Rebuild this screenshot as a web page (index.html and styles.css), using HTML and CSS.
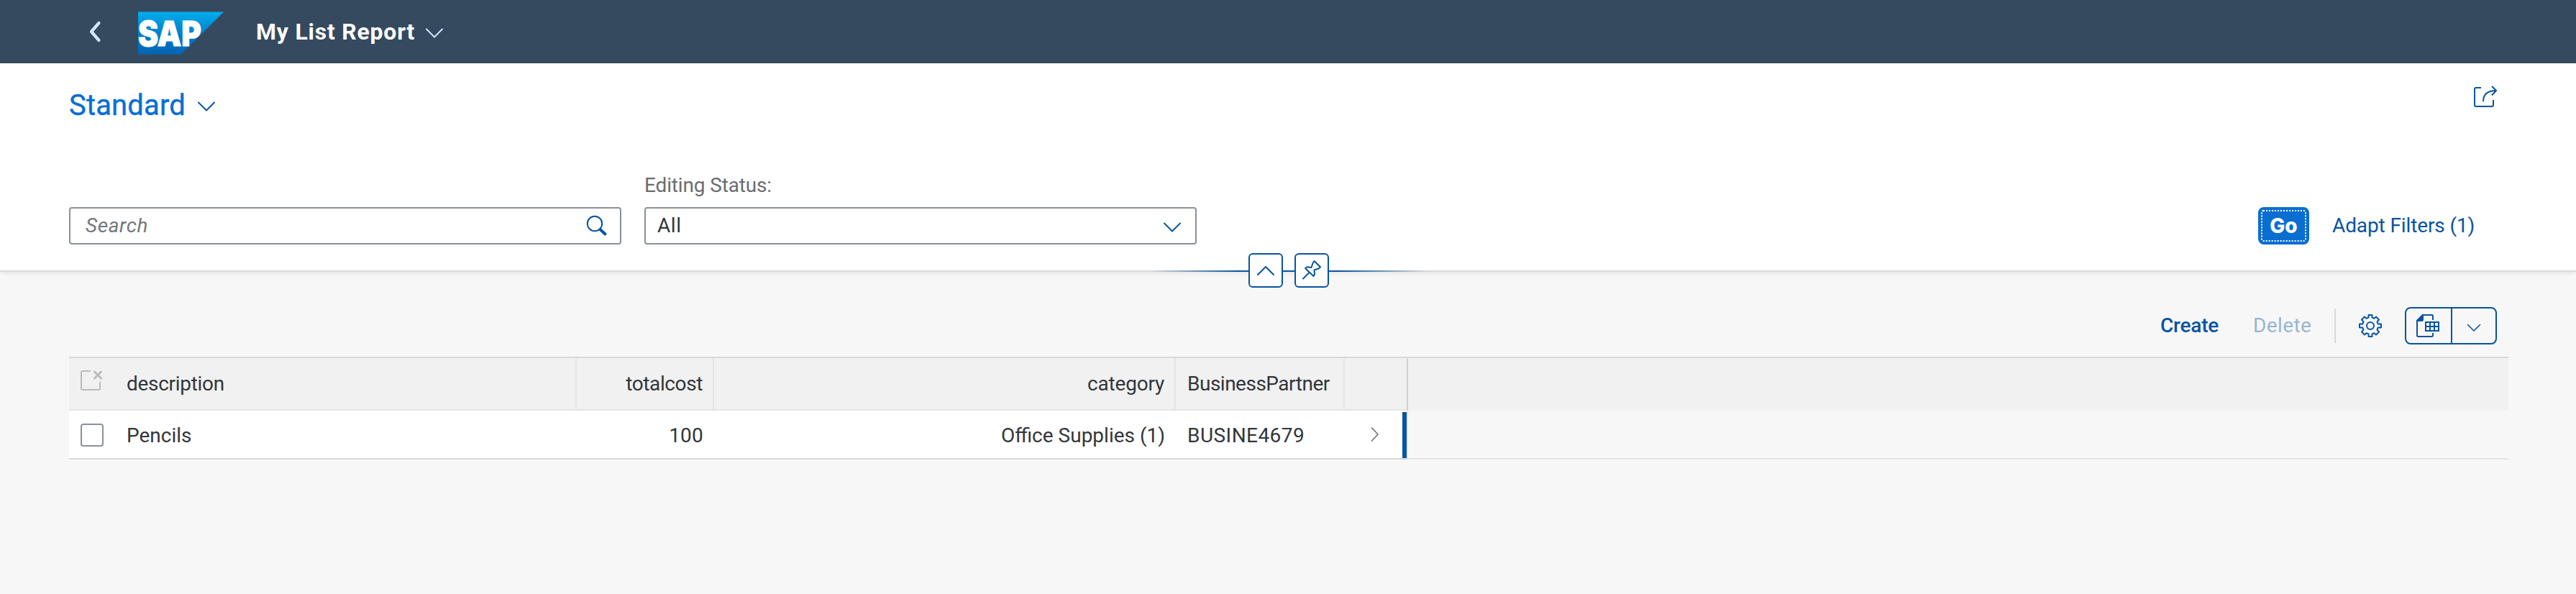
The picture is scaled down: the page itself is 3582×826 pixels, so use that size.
FILE: index.html
```html
<!DOCTYPE html>
<html lang="en">
<head>
<meta charset="utf-8">
<title>My List Report</title>
<link rel="stylesheet" href="styles.css">
</head>
<body>
<header class="shell">
  <svg class="shell-back" width="20" height="32" viewBox="0 0 20 32"><path d="M16.500 4 6 16l10.500 12" fill="none" stroke="#d1e8ff" stroke-width="4.200" stroke-linecap="round" stroke-linejoin="round"/></svg>
  <svg class="shell-logo" width="120" height="60" viewBox="0 0 120 60">
    <defs><linearGradient id="sap" x1="0" y1="0" x2="0" y2="1"><stop offset="0" stop-color="#00aeef"/><stop offset=".25" stop-color="#0096db"/><stop offset=".6" stop-color="#0079c6"/><stop offset="1" stop-color="#0564b4"/></linearGradient></defs>
    <path d="M0 .5h119L60 59.500H0z" fill="url(#sap)"/>
    <text class="logo-text" x="0" y="47.500" textLength="88" lengthAdjust="spacingAndGlyphs">SAP</text>
  </svg>
  <h1 class="shell-title">My List Report</h1>
  <svg width="26" height="16" viewBox="0 0 26 16"><path d="M2 2.500l11 11 11-11" fill="none" stroke="#d1e8ff" stroke-width="2" stroke-linecap="round" stroke-linejoin="round"/></svg>
</header>

<section class="filters">
  <div class="variant-row">
    <div class="variant">
      <span class="variant-name">Standard</span>
      <svg width="26" height="16" viewBox="0 0 26 16"><path d="M2 2.500l11 11 11-11" fill="none" stroke="#0854a0" stroke-width="2" stroke-linecap="round" stroke-linejoin="round"/></svg>
    </div>
    <svg class="share" width="34" height="32" viewBox="0 0 34 32" fill="none" stroke="#0854a0" stroke-width="2"><path d="M10 3H3a2 2 0 0 0-2 2v22a2 2 0 0 0 2 2h22a2 2 0 0 0 2-2v-7"/><path d="M13 22C13 12 19 7 31 7M25 1l6 6-6 6.500"/></svg>
  </div>
  <div class="filter-row">
    <div class="field search">
      <span class="placeholder">Search</span>
      <svg width="30" height="30" viewBox="0 0 30 30" fill="none" stroke="#0854a0"><circle cx="12" cy="12" r="10.200" stroke-width="2"/><path d="M20 20.500l6.500 6" stroke-width="4" stroke-linecap="round"/></svg>
    </div>
    <div class="filter-item">
      <span class="label">Editing Status:</span>
      <div class="field select">
        <span class="value">All</span>
        <svg width="26" height="16" viewBox="0 0 26 16"><path d="M2 2.500l11 11 11-11" fill="none" stroke="#0854a0" stroke-width="2" stroke-linecap="round" stroke-linejoin="round"/></svg>
      </div>
    </div>
    <button class="go"><span>Go</span></button>
    <span class="adapt">Adapt Filters (1)</span>
  </div>
  <div class="header-toggle">
    <span class="fade fade-left"></span>
    <button class="toggle"><svg width="44" height="44" viewBox="0 0 44 44"><path d="M11 28 22 17l11 11" fill="none" stroke="#0854a0" stroke-width="2" stroke-linecap="round" stroke-linejoin="round"/></svg></button>
    <span class="link"></span>
    <button class="toggle"><svg width="44" height="44" viewBox="0 0 44 44" fill="none" stroke="#0854a0" stroke-width="2" stroke-linejoin="round" stroke-linecap="round"><path d="M25.500 9 34 17.200 31.500 19.500 25.500 21.500 26 27.500 24.500 30 13 19 15.500 17.200 21.500 18 23.500 12z"/><path d="M18.500 25 10 33.500"/></svg></button>
    <span class="fade fade-right"></span>
  </div>
</section>

<main class="content">
  <div class="toolbar">
    <span class="action create">Create</span>
    <span class="action delete">Delete</span>
    <span class="separator"></span>
    <svg class="gear" width="32" height="32" viewBox="0 0 32 32" fill="none" stroke="#0854a0" stroke-width="2" stroke-linejoin="round"><path d="M13.500 1h5v3.500l3 1.300 2.500-2.300 4 4-2.500 2.800 1.300 3.200H31v5h-4.200l-1.300 3.200 2.500 2.800-4 4-2.500-2.300-3 1.300V31h-5v-3.500l-3-1.300L8 28.500l-4-4 2.500-2.800-1.300-3.200H1v-5h4.200l1.300-3.200L4 7.500l4-4 2.500 2.300 3-1.300z"/><circle cx="16" cy="16" r="5"/></svg>
    <div class="split">
      <span class="split-main"><svg width="32" height="32" viewBox="0 0 32 32" fill="none" stroke="#0854a0" stroke-width="2"><path d="M23 8V2.500A1.500 1.500 0 0 0 21.500 1H9L1 9v20.500A1.500 1.500 0 0 0 2.500 31h19a1.500 1.500 0 0 0 1.500-1.500V26"/><path d="M8.500 0H10v8.500L8 10H0V8.500z" fill="#0854a0" stroke="none"/><path d="M13 11h18v12H13zM19 11v12M25 11v12M13 17h18"/></svg></span>
      <span class="split-arrow"><svg width="20" height="12" viewBox="0 0 20 12"><path d="M1.500 1.500 10 10l8.500-8.500" fill="none" stroke="#0854a0" stroke-width="1.600" stroke-linecap="round" stroke-linejoin="round"/></svg></span>
    </div>
  </div>

  <div class="table">
    <div class="row head">
      <div class="cell check"><svg class="deselect" width="32" height="30" viewBox="0 0 32 30" fill="none" stroke="#bbb" stroke-width="2"><path d="M14 2H3a2 2 0 0 0-2 2v22a2 2 0 0 0 2 2h22a2 2 0 0 0 2-2v-9"/><path d="M19.500 3l9 9M28.500 3l-9 9" stroke-width="3" stroke-linecap="round"/></svg></div>
      <div class="cell"><span class="t-description">description</span></div>
      <div class="cell num"><span class="t-total">totalcost</span></div>
      <div class="cell num"><span class="t-category">category</span></div>
      <div class="cell"><span class="t-partner">BusinessPartner</span></div>
      <div class="cell last"></div>
      <div class="cell filler"></div>
    </div>
    <div class="row item">
      <div class="cell check"><span class="checkbox"></span></div>
      <div class="cell"><span>Pencils</span></div>
      <div class="cell num"><span class="t-amount">100</span></div>
      <div class="cell num"><span>Office Supplies (1)</span></div>
      <div class="cell"><span class="t-code">BUSINE4679</span></div>
      <div class="cell last"><svg width="12" height="20" viewBox="0 0 12 20"><path d="M1.500 1 10 10l-8.500 9" fill="none" stroke="#6a6d70" stroke-width="1.600" stroke-linecap="round" stroke-linejoin="round"/></svg><span class="navigated"></span></div>
      <div class="cell filler"></div>
    </div>
  </div>
</main>
</body>
</html>
```
FILE: styles.css
```css
* { box-sizing: border-box; }

body {
  margin: 0;
  height: 826px;
  overflow: hidden;
  background: #f7f7f7;
  color: #32363a;
  font: 28px/34px Roboto, "Liberation Sans", sans-serif;
}

svg { display: block; flex: none; }
button { font: inherit; padding: 0; }

/* Shell bar */
.shell {
  height: 88px;
  display: flex;
  align-items: center;
  padding-left: 121px;
  background: #354a5f;
}
.shell-logo { margin: 4px 0 0 51px; }
.logo-text { font: 900 48px Inter, sans-serif; fill: #fff; stroke: #fff; stroke-width: 1px; }
.shell-title {
  width: 235px;
  margin: 0 0 0 44px;
  color: #fff;
  font-size: 32px;
  font-weight: 700;
  line-height: 40px;
  letter-spacing: .77px;
  white-space: nowrap;
}
.shell > svg:last-child { margin-top: 4px; }

/* Filter area */
.filters {
  position: relative;
  height: 290px;
  padding: 0 110px 0 96px;
  background: #fff;
  border-bottom: 2px solid #d9d9d9;
  box-shadow: 0 2px 6px rgba(0, 0, 0, .08);
}
.variant-row { display: flex; justify-content: space-between; height: 140px; }
.variant { display: flex; align-items: center; height: 118px; }
.variant-name {
  width: 178px;
  color: #0a6ed1;
  font-size: 40px;
  line-height: 48px;
  letter-spacing: .15px;
  -webkit-text-stroke: .4px #0a6ed1;
}
.variant svg { margin-top: 2px; }
.share { margin: 31px -2px 0 0; }
.filter-row { display: flex; align-items: flex-end; height: 112px; }
.field {
  display: flex;
  align-items: center;
  justify-content: space-between;
  width: 768px;
  height: 52px;
  background: #fff;
  border: 2px solid #89919a;
  border-radius: 4px;
}
.search { margin-right: 32px; padding: 0 17px 0 21px; }
.placeholder { color: #74777a; font-style: italic; letter-spacing: .6px; }
.filter-item { margin-right: auto; }
.label { display: block; margin-bottom: 13px; color: #6a6d70; letter-spacing: -.15px; }
.select { padding: 0 19px 0 16px; }
.select svg { margin-top: 4px; }
.value { letter-spacing: .6px; }
.go {
  width: 71px;
  height: 52px;
  padding: 4px;
  border: 0;
  border-radius: 8px;
  background: #0a6ed1;
  color: #fff;
}
.go span {
  display: block;
  height: 44px;
  border: 2px dotted #fff;
  border-radius: 3px;
  font: 800 28px/40px Inter, sans-serif;
}
.adapt { width: 261px; padding: 0 0 9px 32px; color: #0854a0; letter-spacing: -.12px; white-space: nowrap; }

/* Collapse and pin buttons sit on the header's lower edge */
.header-toggle {
  position: absolute;
  left: 50%;
  bottom: -24px;
  display: flex;
  align-items: center;
  width: 384px;
  margin-left: -191px;
}
.toggle {
  width: 48px;
  height: 48px;
  border: 2px solid #0854a0;
  border-radius: 6px;
  background: #fff;
}
.link { width: 16px; height: 2px; margin-top: 2px; background: #0854a0; }
.fade { flex: 1; height: 2px; margin-top: 2px; }
.fade-left { background: linear-gradient(to right, rgba(8, 84, 160, 0), #0854a0 90%); }
.fade-right { background: linear-gradient(to left, rgba(8, 84, 160, 0), #0854a0 90%); }

/* Table toolbar */
.toolbar {
  display: flex;
  align-items: center;
  justify-content: flex-end;
  height: 118px;
  padding: 49px 110px 17px 0;
}
.action { color: #0854a0; }
.create { width: 129px; font-weight: 500; letter-spacing: -.2px; }
.delete { width: 113px; letter-spacing: .4px; opacity: .4; }
.separator { width: 2px; height: 48px; background: #d9d9d9; }
.gear { margin: 0 32px; }
.split { display: flex; width: 128px; height: 52px; border: 2px solid #0854a0; border-radius: 8px; }
.split-main { width: 64px; padding: 8px 0 0 14px; border-right: 2px solid #0854a0; }
.split-arrow { flex: 1; padding: 21px 0 0 20px; }

/* Table */
.table { width: 3392px; margin-left: 96px; border-top: 2px solid #d9d9d9; }
.row { display: grid; grid-template-columns: 64px 642px 191px 642px 235px 88px 1fr; }
.head { height: 73px; }
.item { height: 68px; }
.cell { position: relative; display: flex; align-items: center; padding: 0 16px; white-space: nowrap; }
.num { justify-content: flex-end; padding-right: 14px; }
.check { padding: 0 0 0 16px; }
.head .cell { background: #f1f1f1; border: solid #e5e5e5; border-width: 0 2px 2px 0; }
.head .check { border-right: 0; }
.head .last { border-right-color: #d0d0d0; }
.head .filler { border: 0; }
.item .cell { background: #fff; border-bottom: 2px solid #d9d9d9; padding-top: 3px; }
.item .check { padding-top: 2px; }
.item .num { padding-right: 15px; }
.item .last { padding: 0 0 0 36px; border-right: 2px solid #e5e5e5; }
.item .filler { background: #f7f7f7; border-bottom-color: #e5e5e5; }
.deselect { margin-bottom: 10px; }
.checkbox { width: 32px; height: 32px; border: 2px solid #89919a; border-radius: 4px; }
.navigated { position: absolute; top: 2px; right: 0; bottom: 0; width: 6px; background: #0854a0; }
.t-description { letter-spacing: -.3px; }
.t-category { letter-spacing: -.2px; }
.t-total { letter-spacing: -.4px; }
.t-partner { letter-spacing: -.5px; }
.t-amount { letter-spacing: .2px; }
.t-code { letter-spacing: .45px; }
```
